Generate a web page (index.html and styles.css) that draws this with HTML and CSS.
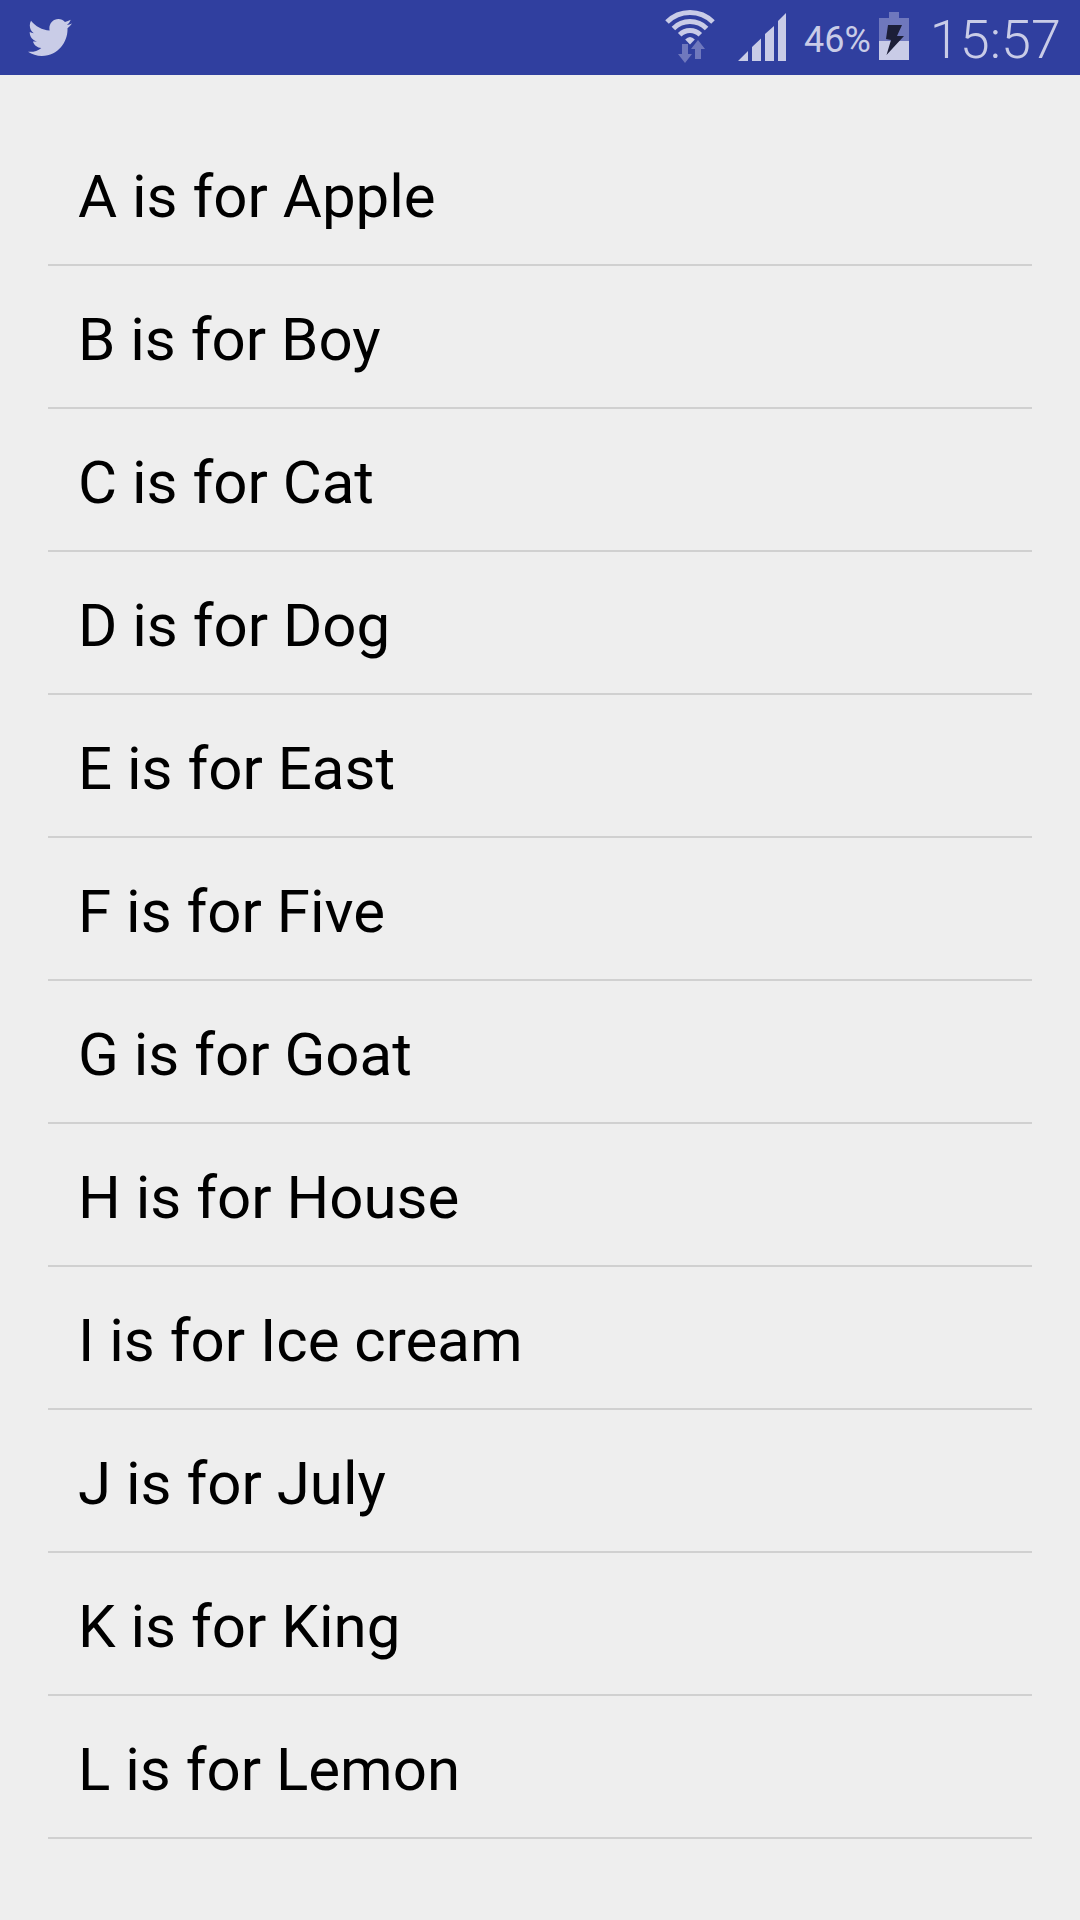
FILE: index.html
```html
<!DOCTYPE html>
<html lang="en">
<head>
  <meta charset="utf-8">
  <meta name="viewport" content="width=device-width, initial-scale=1">
  <title>Alphabet</title>
  <link rel="stylesheet" href="styles.css">
</head>
<body>
  <header class="status-bar">
    <svg class="icon-bird" width="44" height="37" viewBox="0 2.2 24 19.6" preserveAspectRatio="none" role="img" aria-label="Twitter">
      <path d="M23.954 4.569c-.885.389-1.83.654-2.825.775 1.014-.611 1.794-1.574 2.163-2.723-.951.555-2.005.959-3.127 1.184-.896-.959-2.173-1.559-3.591-1.559-2.717 0-4.92 2.203-4.92 4.917 0 .39.045.765.127 1.124C7.691 8.094 4.066 6.13 1.64 3.161c-.427.722-.666 1.561-.666 2.475 0 1.71.87 3.213 2.188 4.096-.807-.026-1.566-.248-2.228-.616v.061c0 2.385 1.693 4.374 3.946 4.827-.413.111-.849.171-1.296.171-.314 0-.615-.03-.916-.086.631 1.953 2.445 3.377 4.604 3.417-1.68 1.319-3.809 2.105-6.102 2.105-.39 0-.779-.023-1.17-.067 2.189 1.394 4.768 2.209 7.557 2.209 9.054 0 13.999-7.496 13.999-13.986 0-.209 0-.42-.015-.63.961-.689 1.8-1.56 2.46-2.548l-.047-.02z"/>
    </svg>
    <div class="indicators">
      <div class="network">
        <svg width="50" height="75" viewBox="665 0 50 75" role="img" aria-label="Wi-Fi">
          <g class="arcs">
            <path d="M667 22A32.5 32.5 0 0 1 713 22"/>
            <path d="M673.4 28.4A23.5 23.5 0 0 1 706.6 28.4"/>
            <path d="M679.7 34.7A14.5 14.5 0 0 1 700.3 34.7"/>
          </g>
          <path d="M690 44.5L685.2 39.5Q690 34.5 694.8 39.5Z"/>
          <path class="dim" d="M682 44h6v10h4l-7 9l-7-9h4zM698 40l7 9h-4v10h-6v-10h-4z"/>
        </svg>
        <svg width="48" height="75" viewBox="738 0 48 75" role="img" aria-label="Signal">
          <path d="M738 61L748 51V61ZM752 61V47L761 38.500V61ZM765 61V34L774 26V61ZM778 61V21L786 13V61Z"/>
        </svg>
      </div>
      <div class="battery">
        <span class="percent">46%</span>
        <svg width="30" height="75" viewBox="879 0 30 75" role="img" aria-label="Charging">
          <path class="dim" d="M889 12h10v6h10v23h-30v-23h10z"/>
          <path d="M879 41h30v19h-30z"/>
          <path class="bolt" d="M888 25H902L897 36H904L886.500 55L891 40L886 39Z"/>
        </svg>
      </div>
      <time class="clock">15:57</time>
    </div>
  </header>
  <main>
    <ul class="list">
      <li class="row">A is for Apple</li>
      <li class="row">B is for Boy</li>
      <li class="row">C is for Cat</li>
      <li class="row">D is for Dog</li>
      <li class="row">E is for East</li>
      <li class="row">F is for Five</li>
      <li class="row">G is for Goat</li>
      <li class="row">H is for House</li>
      <li class="row">I is for Ice cream</li>
      <li class="row">J is for July</li>
      <li class="row">K is for King</li>
      <li class="row">L is for Lemon</li>
    </ul>
  </main>
</body>
</html>
```
FILE: styles.css
```css
* {
  box-sizing: border-box;
}

body {
  margin: 0;
  min-height: 100vh;
  background: #eeeeee;
  color: #000;
  font-family: Roboto, sans-serif;
}

.status-bar {
  display: flex;
  align-items: center;
  justify-content: space-between;
  height: 75px;
  padding: 0 19px 0 28px;
  background: #303f9f;
  color: #c9cce7;
}

.status-bar svg {
  display: block;
  fill: #c9cce7;
}

.status-bar .dim {
  fill: #6f78bd;
}

.status-bar .bolt {
  fill: #1c1f38;
}

.arcs {
  fill: none;
  stroke: #c9cce7;
  stroke-width: 5;
}

.indicators {
  display: flex;
  align-items: center;
  gap: 18px;
}

.network {
  display: flex;
  gap: 23px;
}

.battery {
  display: flex;
  align-items: center;
  gap: 8px;
}

.percent {
  padding-top: 4px;
  font-size: 36px;
  line-height: 42px;
}

.clock {
  padding: 4px 0 0 3px;
  font-size: 54px;
  font-weight: 350;
  line-height: 64px;
}

.list {
  margin: 0;
  padding: 48px;
  list-style: none;
}

.row {
  padding: 39px 30px 32px;
  border-bottom: 2px solid #d0d0d0;
  font-size: 60px;
  line-height: 70px;
}
```
